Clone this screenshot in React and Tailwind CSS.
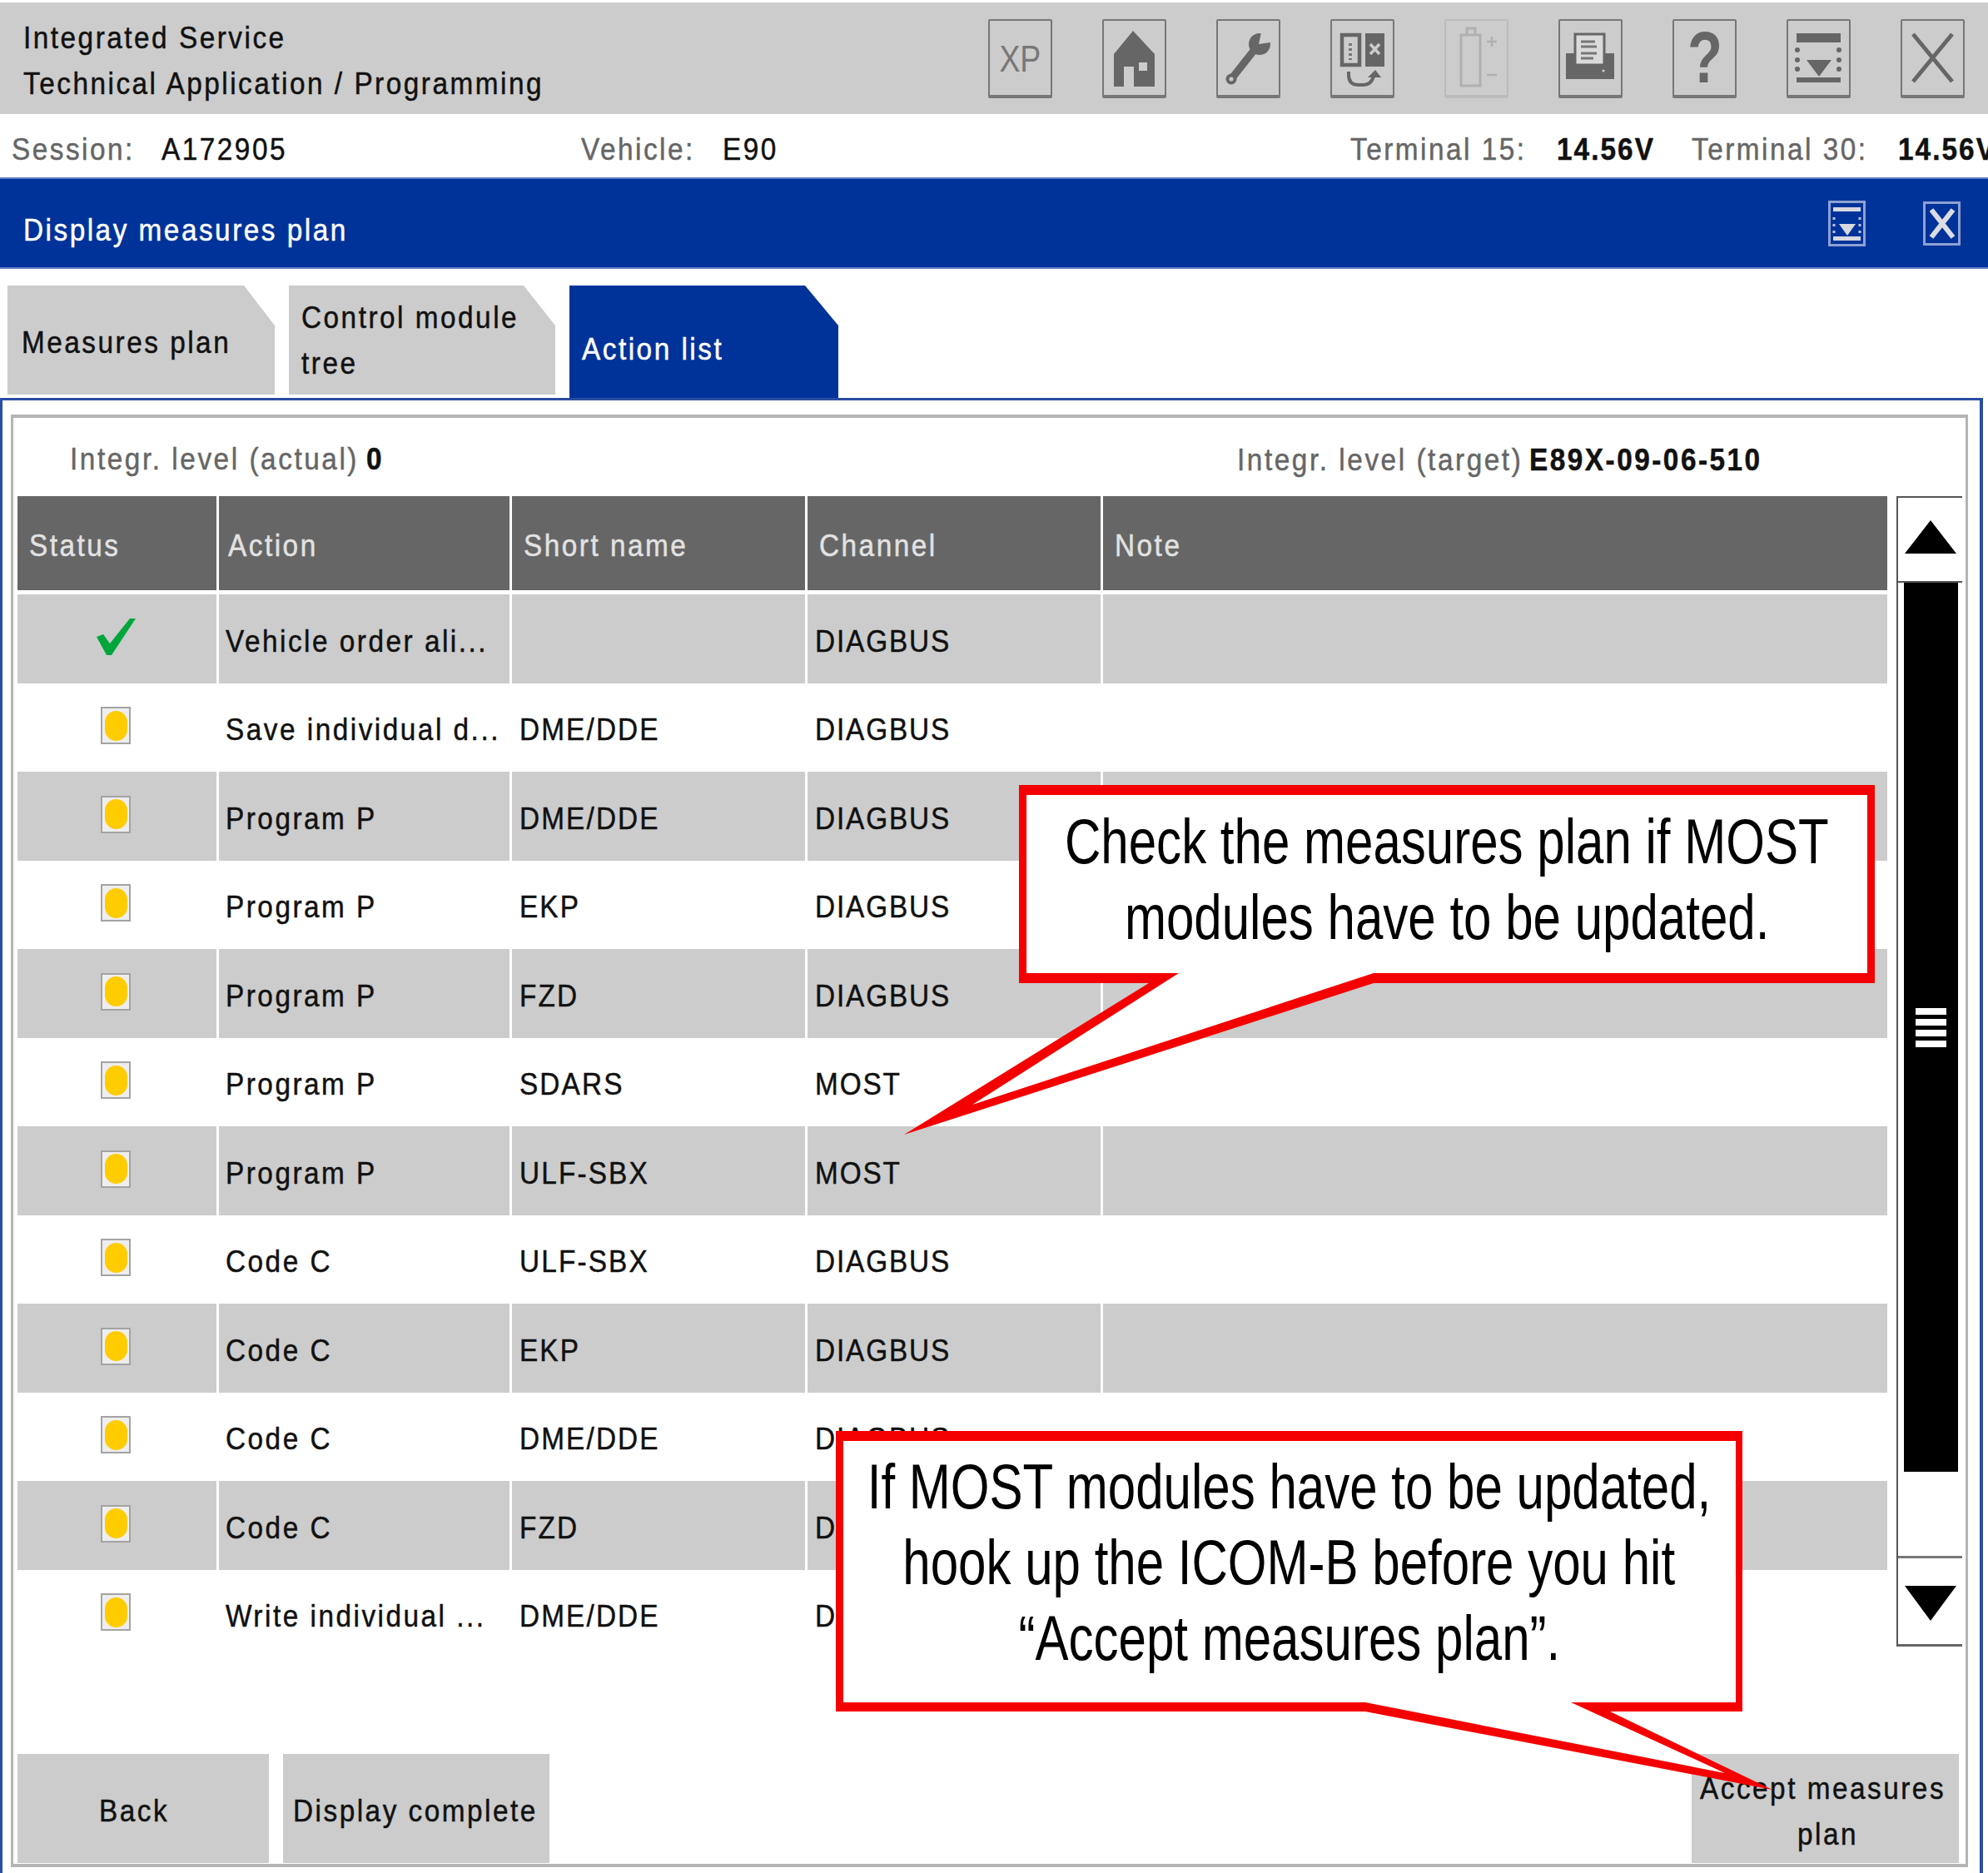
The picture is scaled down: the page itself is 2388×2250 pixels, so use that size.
import React from 'react';

const rows = [
  { status: 'done', action: 'Vehicle order ali...', name: '', channel: 'DIAGBUS' },
  { status: 'open', action: 'Save individual d...', name: 'DME/DDE', channel: 'DIAGBUS' },
  { status: 'open', action: 'Program P', name: 'DME/DDE', channel: 'DIAGBUS' },
  { status: 'open', action: 'Program P', name: 'EKP', channel: 'DIAGBUS' },
  { status: 'open', action: 'Program P', name: 'FZD', channel: 'DIAGBUS' },
  { status: 'open', action: 'Program P', name: 'SDARS', channel: 'MOST' },
  { status: 'open', action: 'Program P', name: 'ULF-SBX', channel: 'MOST' },
  { status: 'open', action: 'Code C', name: 'ULF-SBX', channel: 'DIAGBUS' },
  { status: 'open', action: 'Code C', name: 'EKP', channel: 'DIAGBUS' },
  { status: 'open', action: 'Code C', name: 'DME/DDE', channel: 'DIAGBUS' },
  { status: 'open', action: 'Code C', name: 'FZD', channel: 'DIAGBUS' },
  { status: 'open', action: 'Write individual ...', name: 'DME/DDE', channel: 'DIAGBUS' },
];

// narrow text with wide tracking, the source screen is squeezed horizontally
const Txt = ({ className = 'tracking-[2.8px]', children }) => (
  <span className={`inline-block origin-left translate-y-[3px] scale-x-[0.9] whitespace-nowrap text-[37px] leading-none [-webkit-text-stroke:0.5px_currentColor] ${className}`}>
    {children}
  </span>
);

const ToolButton = ({ faint, children }) => (
  <div className={`flex h-[95px] w-[77px] shrink-0 items-center justify-center rounded-[2px] border-x-2 border-b-4 border-t-2 ${faint ? 'border-[#bbb]' : 'border-[#777]'}`}>
    {children}
  </div>
);

const Ico = ({ children }) => (
  <svg width="73" height="89" viewBox="0 0 73 89">{children}</svg>
);

const SmallDrop = () => (
  <svg width="45" height="55" viewBox="0 0 45 55">
    <rect x="1.5" y="1.5" width="42" height="52" fill="none" stroke="#8ea0d2" strokeWidth="3" />
    <rect x="6" y="8" width="33" height="5" fill="#d8d8e0" />
    <rect x="6" y="43" width="33" height="5" fill="#d8d8e0" />
    <path d="M13 28h20l-10 14z" fill="#d8d8e0" />
    <path d="M7 20v22M38 20v22" stroke="#b9c2de" strokeWidth="3" strokeDasharray="3 5" />
  </svg>
);

const SmallClose = () => (
  <svg width="45" height="53" viewBox="0 0 45 53">
    <rect x="1.5" y="1.5" width="42" height="50" fill="none" stroke="#8ea0d2" strokeWidth="3" />
    <path d="M10 10l26 33M36 10L10 43" stroke="#dcdce4" strokeWidth="6" />
  </svg>
);

const StatusIcon = ({ status }) => {
  if (status === 'done') {
    return (
      <svg width="47" height="44" viewBox="0 0 47 44" className="-translate-y-[2px]">
        <path d="M0 22l8-3 8 11L40 0h7L18 44h-6z" fill="#00a63c" />
      </svg>
    );
  }
  return (
    <div className="flex h-[45px] w-[36px] -translate-y-[2px] items-center justify-center border-2 border-[#a3a3a3] bg-[#eeeeee]">
      <div className="h-[36px] w-[27px] rounded-full bg-[#ffcc00]" />
    </div>
  );
};

const Callout = ({ className, width, height, outer, inner, children }) => (
  <div className={`absolute ${className}`}>
    <svg width={width} height={height} viewBox={`0 0 ${width} ${height}`} className="absolute left-0 top-0 overflow-visible">
      <polygon points={outer} fill="#f50000" />
      <polygon points={inner} fill="#ffffff" />
    </svg>
    {children}
  </div>
);

const CalloutLine = ({ children }) => (
  <div className="flex h-[91px] items-center justify-center">
    <span className="inline-block origin-center scale-x-[0.79] whitespace-nowrap text-[76px] leading-none text-black">{children}</span>
  </div>
);

export default function App() {
  return (
    <div className="relative h-[2250px] w-[2388px] overflow-hidden bg-white pt-[3px] font-['Liberation_Sans',Arial,sans-serif] text-[#111]">
      {/* Top bar */}
      <div className="flex h-[134px] items-center justify-between bg-[#cccccc] pl-[28px] pr-[28px]">
        <div className="flex flex-col gap-[18px]">
          <Txt>Integrated Service</Txt>
          <Txt>Technical Application / Programming</Txt>
        </div>
        <div className="flex gap-[60px]">
          <ToolButton>
            <span className="inline-block translate-y-[2px] scale-x-[0.85] text-[44px] text-[#777]">XP</span>
          </ToolButton>
          <ToolButton>
            <Ico>
              <path d="M35 12L12 40v39h12V55h12v24h25V40z" fill="#666" />
              <rect x="42" y="50" width="10" height="10" fill="#ccc" />
            </Ico>
          </ToolButton>
          <ToolButton>
            <Ico>
              <path d="M16 70L46 32" stroke="#666" strokeWidth="9" />
              <circle cx="16" cy="70" r="6.5" fill="#666" />
              <circle cx="16" cy="70" r="2.5" fill="#ccc" />
              <circle cx="50" cy="28" r="13" fill="#666" />
              <path d="M49 28l4-19 18 16z" fill="#ccc" />
            </Ico>
          </ToolButton>
          <ToolButton>
            <Ico>
              <rect x="12" y="17" width="21" height="36" fill="none" stroke="#666" strokeWidth="4.5" />
              <rect x="40" y="15" width="23" height="40" fill="#666" />
              <path d="M22 27v20" stroke="#777" strokeWidth="4" strokeDasharray="3 3" />
              <path d="M46 28l11 12M57 28L46 40" stroke="#ccc" strokeWidth="3.5" />
              <path d="M20 61v4c0 10 6 12 12 12h6c6 0 10-4 12-10" fill="none" stroke="#666" strokeWidth="4" />
              <path d="M52 59l-9 9h16z" fill="#666" />
            </Ico>
          </ToolButton>
          <ToolButton faint>
            <Ico>
              <path d="M18 17h23v61H18zM25 17V9h10v8" fill="none" stroke="#b0b0b0" strokeWidth="3" />
              <path d="M49 25h12M55 19v12M49 65h12" stroke="#b0b0b0" strokeWidth="2.5" />
            </Ico>
          </ToolButton>
          <ToolButton>
            <Ico>
              <path d="M7 39h10v14h37V39h11v31H7z" fill="#666" />
              <rect x="18" y="16" width="35" height="37" fill="#dadada" stroke="#666" strokeWidth="3" />
              <path d="M25 25h17M25 31h19M25 39h19M25 45h15" stroke="#777" strokeWidth="3" />
              <circle cx="52" cy="60" r="1.6" fill="#ccc" />
            </Ico>
          </ToolButton>
          <ToolButton>
            <span className="inline-block scale-x-[0.78] text-[88px] font-bold leading-none text-[#666]">?</span>
          </ToolButton>
          <ToolButton>
            <Ico>
              <rect x="10" y="15" width="53" height="11" fill="#666" />
              <rect x="10" y="68" width="53" height="6" fill="#666" />
              <path d="M22 47h30L37 67z" fill="#666" />
              <circle cx="11" cy="35" r="3" fill="#666" />
              <circle cx="11" cy="47" r="3" fill="#666" />
              <circle cx="11" cy="58" r="3" fill="#666" />
              <circle cx="61" cy="35" r="3" fill="#666" />
              <circle cx="61" cy="47" r="3" fill="#666" />
              <circle cx="61" cy="58" r="3" fill="#666" />
            </Ico>
          </ToolButton>
          <ToolButton>
            <Ico>
              <path d="M13 16l47 57M60 16L13 73" stroke="#666" strokeWidth="5" />
            </Ico>
          </ToolButton>
        </div>
      </div>

      {/* Session row */}
      <div className="flex h-[76px] items-center overflow-hidden pt-[3px] text-[#666]">
        <div className="w-[194px] shrink-0 pl-[14px]"><Txt>Session:</Txt></div>
        <div className="w-[504px] shrink-0"><Txt className="tracking-[2.8px] text-[#111]">A172905</Txt></div>
        <div className="w-[170px] shrink-0"><Txt>Vehicle:</Txt></div>
        <div className="w-[754px] shrink-0"><Txt className="tracking-[2.8px] text-[#111]">E90</Txt></div>
        <div className="w-[248px] shrink-0"><Txt>Terminal 15:</Txt></div>
        <div className="w-[162px] shrink-0"><Txt className="tracking-[2.3px] font-bold text-[#111]">14.56V</Txt></div>
        <div className="w-[248px] shrink-0"><Txt>Terminal 30:</Txt></div>
        <div className="shrink-0"><Txt className="tracking-[2.3px] font-bold text-[#111]">14.56V</Txt></div>
      </div>

      {/* Title bar */}
      <div className="flex h-[110px] items-center justify-between border-y-2 border-[#5f7fc4] bg-[#003399] pl-[28px] pr-[33px]">
        <div className="pt-[12px]"><Txt className="tracking-[2.8px] text-white">Display measures plan</Txt></div>
        <div className="flex items-center gap-[69px]">
          <SmallDrop />
          <SmallClose />
        </div>
      </div>

      {/* Tabs */}
      <div className="flex h-[155px] items-end gap-[17px] pl-[9px]">
        <div className="mb-[4px] flex h-[131px] w-[321px] items-center bg-[#cccccc] pl-[17px] [clip-path:polygon(0_0,284px_0,100%_48px,100%_100%,0_100%)]">
          <Txt>Measures plan</Txt>
        </div>
        <div className="mb-[4px] flex h-[131px] w-[320px] flex-col justify-center gap-[18px] bg-[#cccccc] pb-[6px] pl-[15px] [clip-path:polygon(0_0,282px_0,100%_48px,100%_100%,0_100%)]">
          <Txt>Control module</Txt>
          <Txt>tree</Txt>
        </div>
        <div className="flex h-[135px] w-[323px] items-center bg-[#003399] pl-[15px] pt-[12px] [clip-path:polygon(0_0,283px_0,100%_48px,100%_100%,0_100%)]">
          <Txt className="tracking-[2.8px] text-white">Action list</Txt>
        </div>
      </div>

      {/* Panel */}
      <div className="mr-[6px] h-[1772px] border-l-[3px] border-r-[4px] border-t-[3px] border-[#2a4ea3] pl-[10px] pr-[14px] pt-[17px]">
        <div className="flex h-[1745px] flex-col border-x-[3px] border-y-[4px] border-[#b5b5b5] pl-[5px] pr-[4px]">
          <div className="flex h-[94px] shrink-0 items-center text-[#666]">
            <div className="w-[1465px] shrink-0 pl-[63px]">
              <Txt className="tracking-[2.85px]">Integr. level (actual)</Txt>
              <Txt className="ml-[-30px] tracking-[1.9px] font-bold text-[#111]">0</Txt>
            </div>
            <Txt className="tracking-[2.85px]">Integr. level (target)</Txt>
            <Txt className="ml-[-30px] tracking-[2.8px] font-bold text-[#111]">E89X-09-06-510</Txt>
          </div>

          <div className="flex justify-between">
            {/* Action table */}
            <div className="w-[2246px]">
              <div className="grid h-[113px] grid-cols-[239px_349px_352px_352px_942px] gap-x-[3px] text-[#e2e2e2]">
                <div className="flex items-center bg-[#666666] pl-[14px]"><Txt>Status</Txt></div>
                <div className="flex items-center bg-[#666666] pl-[11px]"><Txt>Action</Txt></div>
                <div className="flex items-center bg-[#666666] pl-[14px]"><Txt>Short name</Txt></div>
                <div className="flex items-center bg-[#666666] pl-[14px]"><Txt>Channel</Txt></div>
                <div className="flex items-center bg-[#666666] pl-[14px]"><Txt>Note</Txt></div>
              </div>
              <div className="pt-[5px]">
                {rows.map((row, i) => (
                  <div key={i} className="grid h-[106.5px] grid-cols-[239px_349px_352px_352px_942px] gap-x-[3px]">
                    <div className={`flex items-center justify-center pr-[3px] ${i % 2 === 0 ? 'bg-[#cccccc]' : ''}`}>
                      <StatusIcon status={row.status} />
                    </div>
                    <div className={`flex items-center pl-[8px] ${i % 2 === 0 ? 'bg-[#cccccc]' : ''}`}><Txt>{row.action}</Txt></div>
                    <div className={`flex items-center pl-[9px] ${i % 2 === 0 ? 'bg-[#cccccc]' : ''}`}><Txt className="tracking-[2.4px]">{row.name}</Txt></div>
                    <div className={`flex items-center pl-[9px] ${i % 2 === 0 ? 'bg-[#cccccc]' : ''}`}><Txt className="tracking-[2.1px]">{row.channel}</Txt></div>
                    <div className={i % 2 === 0 ? 'bg-[#cccccc]' : ''} />
                  </div>
                ))}
              </div>
            </div>

            {/* Scrollbar */}
            <div className="flex h-[1382px] w-[79px] flex-col border-l-2 border-[#555]">
              <div className="flex h-[104px] shrink-0 items-center justify-center border-y-2 border-[#555] pb-[6px]">
                <svg width="62" height="40" viewBox="0 0 62 40"><path d="M31 0l31 40H0z" fill="#000" /></svg>
              </div>
              <div className="ml-[7px] flex h-[1068px] w-[65px] flex-col items-center justify-center gap-[5px] bg-black">
                <div className="h-[8px] w-[37px] bg-white" />
                <div className="h-[8px] w-[37px] bg-white" />
                <div className="h-[8px] w-[37px] bg-white" />
                <div className="h-[8px] w-[37px] bg-white" />
              </div>
              <div className="h-[104px] shrink-0 border-b-[3px] border-[#777]" />
              <div className="flex flex-1 items-center justify-center border-b-[3px] border-[#666] pt-[4px]">
                <svg width="62" height="42" viewBox="0 0 62 42"><path d="M0 0h62L31 42z" fill="#000" /></svg>
              </div>
            </div>
          </div>

          {/* Buttons */}
          <div className="mb-[1px] mt-auto flex h-[131px] shrink-0 gap-[17px] pr-[4px]">
            <div className="flex w-[302px] items-center justify-center bg-[#cccccc] pr-[13px]"><Txt>Back</Txt></div>
            <div className="flex w-[320px] items-center justify-center bg-[#cccccc] pl-[30px]"><Txt>Display complete</Txt></div>
            <div className="ml-auto flex w-[321px] flex-col items-center justify-center gap-[18px] bg-[#cccccc] pl-[26px]">
              <Txt>Accept measures</Txt>
              <Txt className="mr-[12px] tracking-[2.8px]">plan</Txt>
            </div>
          </div>
        </div>
      </div>

      {/* Annotations */}
      <Callout
        className="left-[1224px] top-[943px] h-[238px] w-[1028px]"
        width={1028}
        height={238}
        outer="0,0 1028,0 1028,238 426,238 -138,420 156,238 0,238"
        inner="9,12 1019,12 1019,226 426,226 -56,384 192,226 9,226"
      >
        <div className="relative pt-[22px]">
          <CalloutLine>Check the measures plan if MOST</CalloutLine>
          <CalloutLine>modules have to be updated.</CalloutLine>
        </div>
      </Callout>

      <Callout
        className="left-[1004px] top-[1719px] h-[337px] w-[1089px]"
        width={1089}
        height={337}
        outer="0,0 1089,0 1089,337 930,337 1125,431 636,337 0,337"
        inner="9,12 1081,12 1081,326 883,326 1068,411 636,326 9,326"
      >
        <div className="relative pt-[21px]">
          <CalloutLine>If MOST modules have to be updated,</CalloutLine>
          <CalloutLine>hook up the ICOM-B before you hit</CalloutLine>
          <CalloutLine>“Accept measures plan”.</CalloutLine>
        </div>
      </Callout>
    </div>
  );
}
